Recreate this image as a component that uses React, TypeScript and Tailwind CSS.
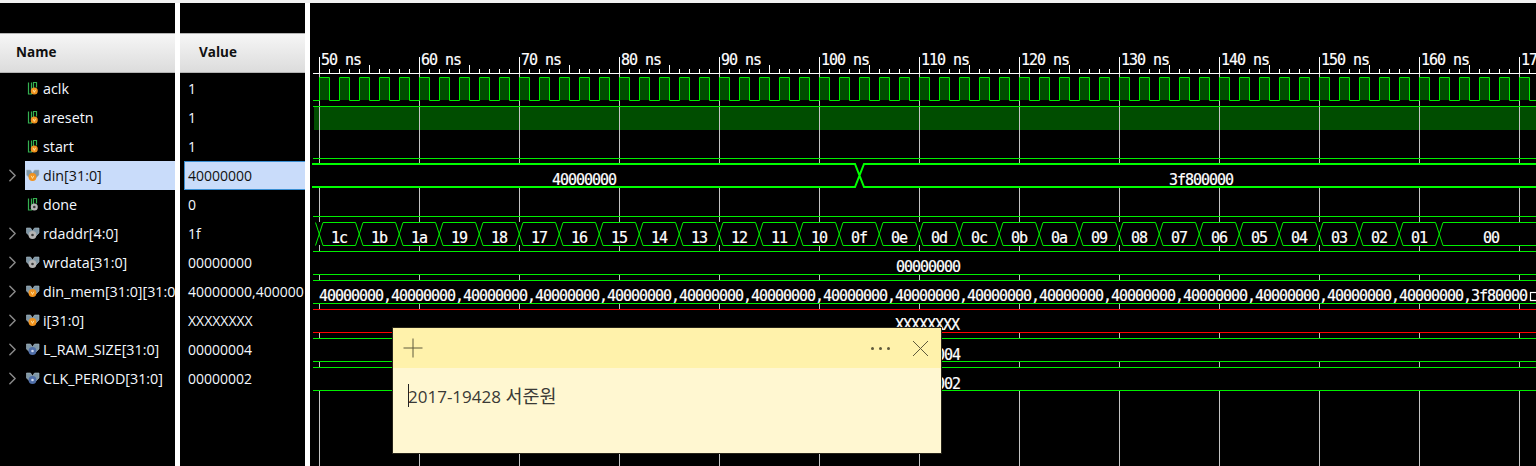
import type { ReactNode } from "react";
import { ChevronRight } from "lucide-react";

const UI_FONT = "font-['Open_Sans','Noto_Sans',sans-serif]";

type Kind = "v" | "g" | "c";
type Sig = { name: string; value: string; bus?: boolean; kind: Kind; selected?: boolean };

const SIGNALS: Sig[] = [
    { name: "aclk", value: "1", kind: "v" },
    { name: "aresetn", value: "1", kind: "v" },
    { name: "start", value: "1", kind: "v" },
    { name: "din[31:0]", value: "40000000", bus: true, kind: "v", selected: true },
    { name: "done", value: "0", kind: "g" },
    { name: "rdaddr[4:0]", value: "1f", bus: true, kind: "g" },
    { name: "wrdata[31:0]", value: "00000000", bus: true, kind: "g" },
    { name: "din_mem[31:0][31:0]", value: "40000000,40000000,40000000", bus: true, kind: "v" },
    { name: "i[31:0]", value: "XXXXXXXX", bus: true, kind: "v" },
    { name: "L_RAM_SIZE[31:0]", value: "00000004", bus: true, kind: "c" },
    { name: "CLK_PERIOD[31:0]", value: "00000002", bus: true, kind: "c" },
];

const DOT: Record<Kind, string> = { v: "#f0921e", g: "#b5b5b5", c: "#4f6ea8" };
const MARK: Record<Kind, string> = { v: "#fff0b8", g: "#3c3c3c", c: "#cfd9f0" };

const GREEN = "#00ee00";
const BRIGHT = "#00ff00";
const GRID = "#c4c4c4";
const RIGHT = 1536;

const GRID_X = Array.from({ length: 13 }, (_, i) => 319 + i * 100);
const TICKS = Array.from({ length: 123 }, (_, i) => 319 + i * 10);
const CLOCK = Array.from({ length: 61 }, (_, i) => 319 + i * 20);
const ADDRS = "1c,1b,1a,19,18,17,16,15,14,13,12,11,10,0f,0e,0d,0c,0b,0a,09,08,07,06,05,04,03,02,01".split(",");
const CROSS = Array.from({ length: 29 }, (_, i) => 319 + i * 40);

function SignalIcon({ sig }: { sig: Sig }) {
    const cx = sig.bus ? 6.5 : 8.3;
    const cy = sig.bus ? 9 : 10;
    return (
        <svg width="14" height="16" viewBox="0 0 14 16" className="shrink-0">
            {sig.bus ? (
                <path d="M0.5 2h4l2 3 2-3h4.5v5l-3 3H3.5L0.5 7z" fill="#7f97a6" stroke="#a9b8c2" strokeWidth="0.6" />
            ) : (
                <path d="M2.5 1.5v11.5H5.5V1.5M7.5 7V1.5H10.5v5" fill="none" stroke="#35b050" strokeWidth="1.2" />
            )}
            <circle cx={cx} cy={cy} r={sig.bus ? 3.9 : 3.5} fill={DOT[sig.kind]} />
            {sig.kind === "v" ? (
                <path d={`M${cx - 1.3} ${cy - 1.2}L${cx} ${cy + 1.4}L${cx + 1.3} ${cy - 1.2}`} fill="none" stroke={MARK.v} strokeWidth="0.8" />
            ) : (
                <circle cx={cx} cy={cy} r="1.3" fill={MARK[sig.kind]} />
            )}
        </svg>
    );
}

function NameRow({ sig }: { sig: Sig }) {
    return (
        <div className="flex h-[29px] items-center">
            <div className="flex w-[25px] shrink-0 justify-center">
                {sig.bus && <ChevronRight size={21} strokeWidth={1.7} className="text-[#8a8a8a]" />}
            </div>
            <div
                className={`flex h-full min-w-0 flex-1 items-center gap-[3px] overflow-hidden whitespace-nowrap pl-px text-[14.3px] ${
                    sig.selected ? "bg-[#c9dcfa] text-[#111]" : "text-[#f4f8ff]"
                }`}
            >
                <SignalIcon sig={sig} />
                <span>{sig.name}</span>
            </div>
        </div>
    );
}

function ValueRow({ sig }: { sig: Sig }) {
    return (
        <div className="flex h-[29px] items-center">
            <div
                className={`ml-[4px] flex h-full min-w-0 flex-1 items-center overflow-hidden whitespace-nowrap pl-[3px] ${
                    sig.selected ? "border border-r-0 border-[#3a8fd3] bg-[#c9dcfa] text-[#111]" : "border border-transparent text-[#f4f8ff]"
                }`}
            >
                {sig.value}
            </div>
        </div>
    );
}

function HeaderCell({ label, pad }: { label: string; pad: string }) {
    return (
        <div
            className={`flex h-[40px] items-center border-y border-[#b4b4b4] bg-gradient-to-b from-[#f6f6f6] to-[#dcdcdc] pb-[2px] text-[13.5px] font-bold text-[#101010] ${pad}`}
        >
            {label}
        </div>
    );
}

function WaveText({ x, y, children, anchor = "middle" }: { x: number; y: number; children: ReactNode; anchor?: "middle" | "start" }) {
    return (
        <text
            x={x}
            y={y}
            textAnchor={anchor}
            fill="#ffffff"
            stroke="#ffffff"
            strokeWidth="0.2"
            fontFamily="'DejaVu Sans Mono', monospace"
            fontSize="15"
            letterSpacing="-1.03"
            textRendering="optimizeSpeed"
        >
            {children}
        </text>
    );
}

// one bus row: black body hiding the grid, rails on top and bottom
function BusRow({ top, bottom, color = GREEN }: { top: number; bottom: number; color?: string }) {
    return (
        <g>
            <rect x={313} y={top} width={RIGHT - 313} height={bottom - top} fill="#000" />
            <line x1={313} x2={RIGHT} y1={top + 0.5} y2={top + 0.5} stroke={color} />
            <line x1={313} x2={RIGHT} y1={bottom + 0.5} y2={bottom + 0.5} stroke={color} />
        </g>
    );
}

function Waves() {
    const clockPath =
        "M313 100.5H319.5" +
        CLOCK.map((x) => `V77.5H${x + 10.5}V100.5H${x + 20.5}`).join("");

    return (
        <svg viewBox="310 3 1226 463" width="1226" height="463" className="block">
            {/* aclk and aresetn bodies sit under the grid */}
            {CLOCK.map((x) => (
                <rect key={x} x={x + 1} y={78} width={10} height={22} fill="#004d00" />
            ))}
            <rect x={314} y={107} width={RIGHT - 314} height={23} fill="#004d00" />

            {/* grid */}
            {GRID_X.map((x) => (
                <line key={x} x1={x + 0.5} x2={x + 0.5} y1={73} y2={466} stroke={GRID} />
            ))}

            {/* ruler */}
            <line x1={313} x2={RIGHT} y1={73.5} y2={73.5} stroke="#fff" />
            {TICKS.map((x, i) => (
                <line
                    key={x}
                    x1={x + 0.5}
                    x2={x + 0.5}
                    y1={i % 10 === 0 ? 57 : i % 5 === 0 ? 65 : 69}
                    y2={73}
                    stroke="#fff"
                />
            ))}
            {GRID_X.map((x, i) => (
                <WaveText key={x} x={x + 2} y={65} anchor="start">{`${50 + i * 10} ns`}</WaveText>
            ))}

            {/* aclk */}
            <path d={clockPath} fill="none" stroke={GREEN} />

            {/* aresetn */}
            <line x1={313} x2={RIGHT} y1={106.5} y2={106.5} stroke={GREEN} />

            {/* start */}
            <line x1={313} x2={RIGHT} y1={158.5} y2={158.5} stroke={GREEN} />

            {/* din */}
            <rect x={312} y={164} width={RIGHT - 312} height={23} fill="#000" />
            <path
                d={`M312 164H855L864 187H${RIGHT}M312 187H855L864 164H${RIGHT}`}
                fill="none"
                stroke={BRIGHT}
                strokeWidth="2"
            />
            <WaveText x={584} y={185}>40000000</WaveText>
            <WaveText x={1201} y={185}>3f800000</WaveText>

            {/* done */}
            <line x1={313} x2={RIGHT} y1={216.5} y2={216.5} stroke={GREEN} />

            {/* rdaddr */}
            <rect x={313} y={222} width={RIGHT - 313} height={23} fill="#000" />
            <path
                d={
                    CROSS.map((x) => `M${x - 3.5} 222.5L${x + 4} 245.5M${x + 4} 222.5L${x - 3.5} 245.5`).join("") +
                    CROSS.map((x, i) =>
                        i < CROSS.length - 1
                            ? `M${x + 4} 222.5H${x + 36.5}M${x + 4} 245.5H${x + 36.5}`
                            : `M${x + 4} 222.5H${RIGHT}M${x + 4} 245.5H${RIGHT}`,
                    ).join("")
                }
                fill="none"
                stroke={GREEN}
            />
            {ADDRS.map((a, i) => (
                <WaveText key={a} x={339 + i * 40} y={243}>{a}</WaveText>
            ))}
            <WaveText x={1491} y={243}>00</WaveText>
            <line x1={313} x2={RIGHT} y1={251.5} y2={251.5} stroke={GREEN} />

            {/* wrdata */}
            <BusRow top={251} bottom={274} />
            <WaveText x={928} y={272}>00000000</WaveText>

            {/* din_mem: the last value is cut off with an ellipsis box */}
            <BusRow top={280} bottom={303} />
            <WaveText x={319} y={301} anchor="start">
                {`${"40000000,".repeat(16)}3f80000`}
            </WaveText>
            <rect x={1530.5} y={292.5} width={8} height={8} fill="none" stroke="#fff" strokeWidth="1.2" />

            {/* i */}
            <BusRow top={309} bottom={332} color="#ff0000" />
            <WaveText x={927} y={330}>XXXXXXXX</WaveText>

            {/* L_RAM_SIZE, CLK_PERIOD */}
            <BusRow top={338} bottom={361} />
            <WaveText x={928} y={360}>00000004</WaveText>
            <BusRow top={367} bottom={390} />
            <WaveText x={928} y={389}>00000002</WaveText>
        </svg>
    );
}

function StickyNote() {
    return (
        <div className="absolute left-[392px] top-[327px] flex h-[127px] w-[550px] flex-col border border-[#26241a] bg-[#fff7d1]">
            <div className="flex h-[40px] items-center bg-[#fff2ab] text-[#5f5a3c]">
                <svg width="20" height="20" viewBox="0 0 20 20" className="ml-[10px]">
                    <path d="M10 0.5v19M0.5 10h19" stroke="currentColor" fill="none" />
                </svg>
                <div className="ml-auto flex items-center gap-[5px]">
                    <span className="size-[3px] rounded-full bg-current" />
                    <span className="size-[3px] rounded-full bg-current" />
                    <span className="size-[3px] rounded-full bg-current" />
                </div>
                <svg width="17" height="17" viewBox="0 0 17 17" className="ml-[22px] mr-[12px]">
                    <path d="M1 1l15 15M16 1L1 16" stroke="currentColor" fill="none" />
                </svg>
            </div>
            <div className="relative px-[15px] pt-[15px] font-['Open_Sans','Noto_Sans_CJK_KR',sans-serif] text-[17px] leading-[26px] text-[#3a3a36]">
                <span className="absolute left-[15px] top-[16px] h-[23px] w-px bg-[#222]" />
                2017-19428 <span className="text-[18.5px]">서준원</span>
            </div>
        </div>
    );
}

export default function App() {
    return (
        <div className={`relative flex h-[466px] w-[1536px] flex-col overflow-hidden bg-white text-[14px] ${UI_FONT}`}>
            <div className="h-[3px] bg-[#f0f0f0]" />
            <div className="flex min-h-0 flex-1">
                {/* Name column */}
                <div className="w-[175px] shrink-0 bg-black pt-[30px]">
                    <HeaderCell label="Name" pad="pl-[16px]" />
                    <div className="pt-px">
                        {SIGNALS.map((s) => (
                            <NameRow key={s.name} sig={s} />
                        ))}
                    </div>
                </div>

                {/* Value column */}
                <div className="ml-[5px] w-[125px] shrink-0 bg-black pt-[30px]">
                    <HeaderCell label="Value" pad="pl-[19px]" />
                    <div className="pt-px">
                        {SIGNALS.map((s) => (
                            <ValueRow key={s.name} sig={s} />
                        ))}
                    </div>
                </div>

                {/* Wave window */}
                <div className="ml-[5px] min-w-0 flex-1 overflow-hidden bg-black">
                    <Waves />
                </div>
            </div>
            <StickyNote />
        </div>
    );
}
